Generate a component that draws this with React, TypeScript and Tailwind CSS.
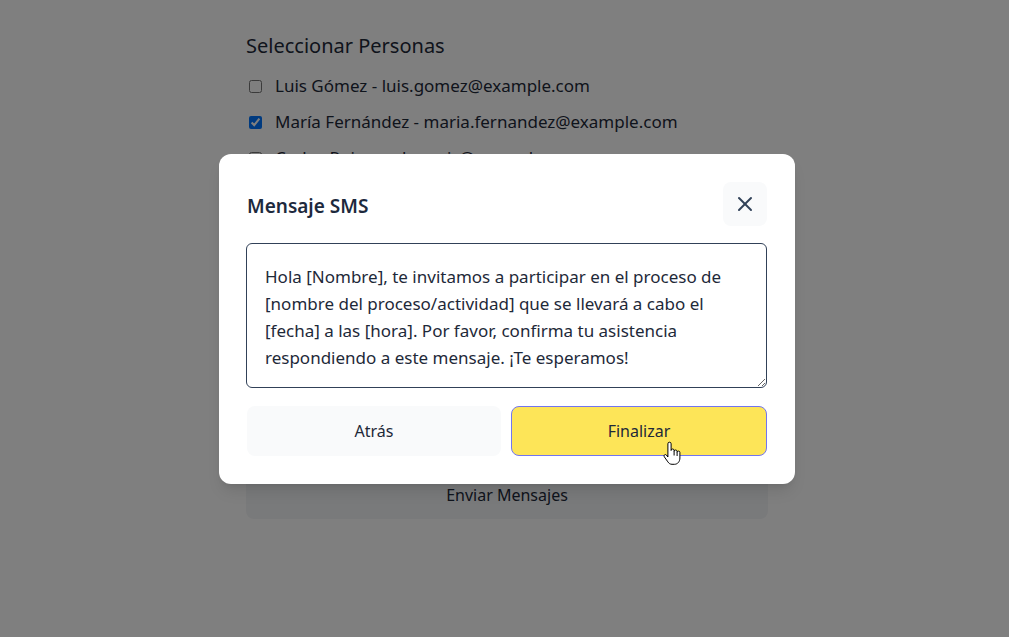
import React from "react";
import { X } from "lucide-react";

const people = [
  { name: "Luis Gómez", email: "luis.gomez@example.com", checked: false },
  { name: "María Fernández", email: "maria.fernandez@example.com", checked: true },
  { name: "Carlos Ruiz", email: "carlos.ruiz@example.com", checked: false },
];

const message =
  "Hola [Nombre], te invitamos a participar en el proceso de\n[nombre del proceso/actividad] que se llevará a cabo el\n[fecha] a las [hora]. Por favor, confirma tu asistencia\nrespondiendo a este mensaje. ¡Te esperamos!";

function HandCursor() {
  return (
    <svg width="20" height="26" viewBox="0 0 20 26" className="absolute left-[662px] top-[441px] pointer-events-none">
      <path
        d="M7.5 1.2a1.6 1.6 0 0 1 1.6 1.6V9.5a1.5 1.5 0 0 1 3 0v1a1.5 1.5 0 0 1 3 0v1a1.4 1.4 0 0 1 2.8 0v5.5c0 3.4-2.2 6.3-5.4 6.3H10c-2 0-3.1-1-4.1-2.4L2.3 15.8a1.35 1.35 0 0 1 2.1-1.7L5.9 16V2.8a1.6 1.6 0 0 1 1.6-1.6Z"
        fill="#fff"
        stroke="#000"
        strokeWidth="1"
        strokeLinejoin="round"
      />
      <path d="M12.1 10.5v4M15.1 11.5v3.5" stroke="#000" strokeWidth="1" />
    </svg>
  );
}

export default function App() {
  return (
    <div
      className="relative min-h-[637px] w-full overflow-hidden bg-white text-gray-800"
      style={{ fontFamily: '"Noto Sans", "Open Sans", Arial, sans-serif' }}
    >
      {/* underlying page */}
      <div className="pl-[5px]">
        <div className="mx-auto w-[522px] pt-8">
          <h2 className="text-[20px] leading-7 text-gray-800">Seleccionar Personas</h2>
          <div className="mt-[14px] flex flex-col gap-3">
            {people.map((p) => (
              <label key={p.email} className="flex h-6 items-center text-[17px] leading-6">
                <input
                  type="checkbox"
                  defaultChecked={p.checked}
                  className="ml-[3px] mr-[13px] h-[13px] w-[13px]"
                />
                <span>
                  {p.name} - {p.email}
                </span>
              </label>
            ))}
          </div>
          <button className="mt-[301px] flex h-12 w-full items-center justify-center rounded-lg bg-gray-100 text-[16px] text-gray-800">
            Enviar Mensajes
          </button>
        </div>
      </div>

      {/* overlay */}
      <div className="absolute inset-0 bg-black/50" />

      {/* modal */}
      <div className="absolute inset-0 flex items-center justify-center pl-[5px]">
        <div className="w-[576px] rounded-xl bg-white p-7 shadow-lg">
          <div className="flex h-11 items-center justify-between">
            <h3 className="mt-[6px] text-[19px] font-semibold text-slate-800">Mensaje SMS</h3>
            <button className="flex h-11 w-11 items-center justify-center rounded-lg bg-gray-50 text-slate-700">
              <X size={24} strokeWidth={2} />
            </button>
          </div>
          <textarea
            readOnly
            rows={4}
            value={message}
            className="mt-[17px] -ml-px block h-[145px] w-[calc(100%+1px)] resize-y rounded-md border border-slate-700 pl-[18px] pr-[14px] pt-[19px] pb-[16px] text-[17px] leading-[27px] text-gray-800 outline-none"
          />
          <div className="mt-[18px] flex gap-[10px]">
            <button className="flex h-[50px] flex-1 items-center justify-center rounded-lg bg-gray-50 text-[16px] text-gray-800">
              Atrás
            </button>
            <button className="flex h-[50px] flex-1 items-center justify-center rounded-lg border border-[#7275f0] bg-[#fde558] text-[16px] text-gray-800">
              Finalizar
            </button>
          </div>
        </div>
      </div>

      <HandCursor />
    </div>
  );
}
